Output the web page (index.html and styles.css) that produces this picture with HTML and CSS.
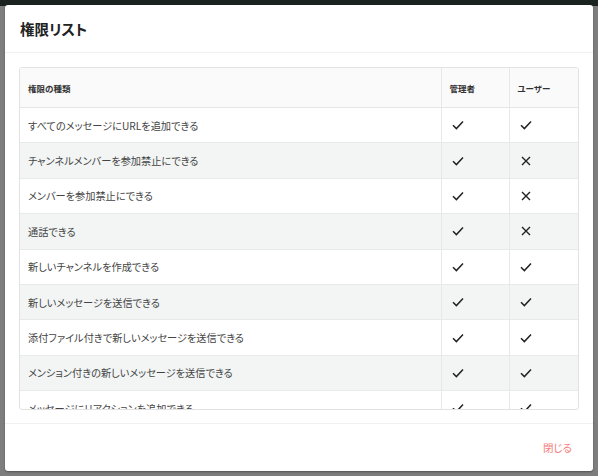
FILE: index.html
```html
<!DOCTYPE html>
<html lang="ja">
<head>
<meta charset="utf-8">
<link rel="stylesheet" href="styles.css">
</head>
<body>
<div class="modal">
  <div class="modal-header"><h1 class="title">権限リスト</h1></div>
  <div class="modal-body">
    <div class="table-wrap">
      <table class="perm">
        <colgroup><col class="c1"><col class="c2"><col class="c3"></colgroup>
        <thead>
          <tr><th>権限の種類</th><th>管理者</th><th>ユーザー</th></tr>
        </thead>
        <tbody>
          <tr><td>すべてのメッセージにURLを追加できる</td><td><svg class="ic" viewBox="0 0 12 10"><path d="M1 5.2 L4.4 8.6 L11 1.6"/></svg></td><td><svg class="ic" viewBox="0 0 12 10"><path d="M1 5.2 L4.4 8.6 L11 1.6"/></svg></td></tr>
          <tr><td>チャンネルメンバーを参加禁止にできる</td><td><svg class="ic" viewBox="0 0 12 10"><path d="M1 5.2 L4.4 8.6 L11 1.6"/></svg></td><td><svg class="ix" viewBox="0 0 10 10"><path d="M1 1 L9 9 M9 1 L1 9"/></svg></td></tr>
          <tr><td>メンバーを参加禁止にできる</td><td><svg class="ic" viewBox="0 0 12 10"><path d="M1 5.2 L4.4 8.6 L11 1.6"/></svg></td><td><svg class="ix" viewBox="0 0 10 10"><path d="M1 1 L9 9 M9 1 L1 9"/></svg></td></tr>
          <tr><td>通話できる</td><td><svg class="ic" viewBox="0 0 12 10"><path d="M1 5.2 L4.4 8.6 L11 1.6"/></svg></td><td><svg class="ix" viewBox="0 0 10 10"><path d="M1 1 L9 9 M9 1 L1 9"/></svg></td></tr>
          <tr><td>新しいチャンネルを作成できる</td><td><svg class="ic" viewBox="0 0 12 10"><path d="M1 5.2 L4.4 8.6 L11 1.6"/></svg></td><td><svg class="ic" viewBox="0 0 12 10"><path d="M1 5.2 L4.4 8.6 L11 1.6"/></svg></td></tr>
          <tr><td>新しいメッセージを送信できる</td><td><svg class="ic" viewBox="0 0 12 10"><path d="M1 5.2 L4.4 8.6 L11 1.6"/></svg></td><td><svg class="ic" viewBox="0 0 12 10"><path d="M1 5.2 L4.4 8.6 L11 1.6"/></svg></td></tr>
          <tr><td>添付ファイル付きで新しいメッセージを送信できる</td><td><svg class="ic" viewBox="0 0 12 10"><path d="M1 5.2 L4.4 8.6 L11 1.6"/></svg></td><td><svg class="ic" viewBox="0 0 12 10"><path d="M1 5.2 L4.4 8.6 L11 1.6"/></svg></td></tr>
          <tr><td>メンション付きの新しいメッセージを送信できる</td><td><svg class="ic" viewBox="0 0 12 10"><path d="M1 5.2 L4.4 8.6 L11 1.6"/></svg></td><td><svg class="ic" viewBox="0 0 12 10"><path d="M1 5.2 L4.4 8.6 L11 1.6"/></svg></td></tr>
          <tr><td>メッセージにリアクションを追加できる</td><td><svg class="ic" viewBox="0 0 12 10"><path d="M1 5.2 L4.4 8.6 L11 1.6"/></svg></td><td><svg class="ic" viewBox="0 0 12 10"><path d="M1 5.2 L4.4 8.6 L11 1.6"/></svg></td></tr>
        </tbody>
      </table>
    </div>
  </div>
  <div class="modal-footer"><button class="close">閉じる</button></div>
</div>
</body>
</html>
```

FILE: styles.css
```css
html, body {
  margin: 0;
  padding: 0;
}
body {
  width: 598px;
  height: 476px;
  overflow: hidden;
  background: linear-gradient(#1b2320 0, #1b2320 6px, #7e7e7e 6px);
  font-family: "Noto Sans CJK JP", "Noto Sans", sans-serif;
  font-feature-settings: "palt";
  color: #333;
}
.modal {
  margin: 5px;
  width: 588px;
  height: 466px;
  background: #fff;
  border-radius: 3px;
  display: flex;
  flex-direction: column;
  box-shadow: 0 1px 2px rgba(0,0,0,0.35);
}
.modal-header {
  height: 47px;
  border-bottom: 1px solid #f1f1f1;
  display: flex;
  align-items: center;
  padding-left: 15px;
}
.title {
  margin: 0;
  font-size: 14.5px;
  font-weight: 700;
  color: #222;
}
.modal-body {
  padding: 14px 14px 13px;
}
.table-wrap {
  height: 341px;
  border: 1px solid #e2e2e2;
  border-radius: 3px;
  overflow: hidden;
}
.perm {
  width: 100%;
  border-collapse: collapse;
  table-layout: fixed;
}
.c1 { width: 421px; }
.c2 { width: 68px; }
.perm th {
  height: 39px;
  padding: 0 8px;
  text-align: left;
  font-size: 8.5px;
  font-weight: 700;
  color: #333;
  background: #fafafa;
  border-bottom: 1px solid #e6e6e6;
}
.perm th + th, .perm td + td {
  border-left: 1px solid #e8e8e8;
}
.perm td {
  height: 34.4px;
  padding: 0 8px;
  font-size: 10.2px;
  color: #444;
  border-top: 1px solid #e6eae9;
  white-space: nowrap;
}
.perm tbody tr:first-child td { border-top: none; }
.perm tbody tr:nth-child(even) td { background: #f2f5f4; }
.perm td + td { padding-left: 10px; }
.ic, .ix {
  display: block;
  fill: none;
  stroke: #222;
}
.ic { width: 12px; height: 10px; stroke-width: 1.5; }
.ix { width: 10px; height: 10px; stroke-width: 1.4; margin-left: 1px; }
.modal-footer {
  flex: 1;
  border-top: 1px solid #f1f1f1;
  display: flex;
  align-items: center;
  justify-content: flex-end;
  padding-right: 21px;
}
.close {
  border: none;
  background: none;
  padding: 0;
  font-family: inherit;
  font-feature-settings: "palt";
  font-size: 10.5px;
  color: #f47b7b;
}
```
